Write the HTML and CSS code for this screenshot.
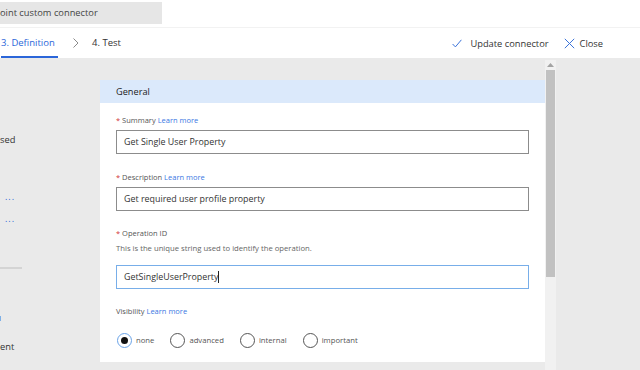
FILE: index.html
```html
<!DOCTYPE html>
<html>
<head>
<meta charset="utf-8">
<link rel="stylesheet" href="styles.css">
</head>
<body>
<div class="page">
  <div class="topbar">
    <div class="titlebox">oint custom connector</div>
  </div>
  <div class="tabbar">
    <div class="tabs">
      <div class="tab active">3. Definition</div>
      <svg class="chev" width="8" height="12" viewBox="0 0 8 12"><path d="M1.5 1.5 L6 6 L1.5 10.5" fill="none" stroke="#8a8a8a" stroke-width="1"/></svg>
      <div class="tab">4. Test</div>
    </div>
    <div class="actions">
      <div class="action check">
        <svg width="10" height="9" viewBox="0 0 10 9"><path d="M0.6 5 L3.4 7.9 L9.4 0.8" fill="none" stroke="#3b73d9" stroke-width="1"/></svg>
        <span>Update connector</span>
      </div>
      <div class="action close">
        <svg width="11" height="11" viewBox="0 0 11 11"><path d="M0.8 0.8 L10.2 10.2 M10.2 0.8 L0.8 10.2" fill="none" stroke="#3b73d9" stroke-width="1"/></svg>
        <span>Close</span>
      </div>
    </div>
  </div>
  <div class="main">
    <div class="side">
      <div class="side-text s1">sed</div>
      <div class="side-dots d1">...</div>
      <div class="side-dots d2">...</div>
      <div class="side-rule"></div>
      <div class="side-mark"></div>
      <div class="side-text s2">ent</div>
    </div>
    <div class="card">
      <div class="card-head">General</div>
      <div class="card-body">
        <div class="label"><span class="req">*</span> Summary <span class="link">Learn more</span></div>
        <div class="input">Get Single User Property</div>
        <div class="label gap"><span class="req">*</span> Description <span class="link">Learn more</span></div>
        <div class="input">Get required user profile property</div>
        <div class="label gap2"><span class="req">*</span> Operation ID</div>
        <div class="helper">This is the unique string used to identify the operation.</div>
        <div class="input focus">GetSingleUserProperty<span class="caret"></span></div>
        <div class="label gap2">Visibility <span class="link">Learn more</span></div>
        <div class="radios">
          <div class="radio"><span class="circle on"><span class="dot"></span></span><span>none</span></div>
          <div class="radio"><span class="circle"></span><span>advanced</span></div>
          <div class="radio"><span class="circle"></span><span>internal</span></div>
          <div class="radio"><span class="circle"></span><span>important</span></div>
        </div>
      </div>
    </div>
    <div class="scroll">
      <svg class="arrow" width="7" height="4" viewBox="0 0 7 4"><path d="M0 4 L3.5 0 L7 4 Z" fill="#a3a3a3"/></svg>
      <div class="thumb"></div>
    </div>
    <div class="rest"></div>
  </div>
</div>
</body>
</html>
```
FILE: styles.css
```css
html, body {
  margin: 0;
  padding: 0;
}
body {
  width: 640px;
  height: 370px;
  overflow: hidden;
  font-family: "Open Sans", "Noto Sans", sans-serif;
  color: #333;
  background: #eaeaea;
}
.page {
  width: 640px;
  height: 370px;
  display: flex;
  flex-direction: column;
}
.topbar {
  height: 28px;
  background: #fff;
  border-bottom: 1px solid #f2f2f2;
  box-sizing: border-box;
  padding-top: 2px;
}
.titlebox {
  width: 162px;
  height: 22px;
  background: #e6e6e6;
  font-size: 9.3px;
  line-height: 22px;
  color: #444;
  white-space: nowrap;
  overflow: hidden;
}
.tabbar {
  height: 30px;
  background: #fff;
  display: flex;
  justify-content: space-between;
  align-items: stretch;
}
.tabs {
  display: flex;
  align-items: stretch;
}
.tab {
  font-size: 9.5px;
  line-height: 28px;
  color: #333;
  padding-top: 1px;
  box-sizing: border-box;
  border-bottom: 2px solid transparent;
  white-space: nowrap;
}
.tab.active {
  color: #2b66d9;
  border-bottom-color: #2b66d9;
  width: 57px;
  margin-left: 1px;
}
.chev {
  align-self: center;
  margin: 0 12px 0 14px;
}
.actions {
  display: flex;
  align-items: center;
  padding-right: 37px;
  padding-top: 1px;
}
.action {
  display: flex;
  align-items: center;
  font-size: 9.3px;
  color: #333;
}
.action.check {
  gap: 8px;
}
.action.close {
  gap: 5px;
  margin-left: 15px;
}
.main {
  flex: 1;
  display: flex;
  background: #eaeaea;
}
.side {
  width: 100px;
  font-size: 9.3px;
  color: #333;
}
.side-text.s1 {
  margin-top: 74px;
  line-height: 16px;
}
.side-dots {
  color: #2b66d9;
  font-size: 9px;
  line-height: 12px;
  letter-spacing: 1px;
  padding-left: 5px;
}
.side-dots.d1 {
  margin-top: 43px;
}
.side-dots.d2 {
  margin-top: 10px;
}
.side-rule {
  width: 22px;
  height: 2px;
  background: #d4d4d4;
  margin-top: 42px;
}
.side-mark {
  width: 1px;
  height: 5px;
  background: #7fb0e6;
  margin-top: 47px;
}
.side-text.s2 {
  margin-top: 18px;
  line-height: 16px;
}
.card {
  width: 445px;
  margin-top: 22px;
  height: 282px;
  background: #fff;
}
.card-head {
  height: 23px;
  background: #dbe9fb;
  font-size: 9.2px;
  line-height: 23px;
  padding-left: 16px;
  color: #222;
}
.card-body {
  padding: 10px 16px 14px 16px;
}
.label {
  font-size: 7.5px;
  line-height: 14px;
  color: #555;
  margin-bottom: 3px;
}
.label.gap {
  margin-top: 16px;
}
.label.gap2 {
  margin-top: 15px;
  margin-bottom: 1px;
}
.req {
  color: #d13438;
}
.link {
  color: #3a78e3;
}
.helper {
  font-size: 7.7px;
  line-height: 14px;
  color: #666;
  margin-bottom: 10px;
}
.input {
  height: 24px;
  box-sizing: border-box;
  border: 1px solid #8c8c8c;
  font-size: 8.9px;
  line-height: 22px;
  padding-left: 7px;
  color: #333;
}
.input.focus {
  border-color: #78aee9;
}
.caret {
  display: inline-block;
  width: 1px;
  height: 12px;
  background: #222;
  vertical-align: middle;
  margin-top: -2px;
}
.radios {
  display: flex;
  align-items: center;
  margin-top: 14px;
  height: 16px;
  padding-left: 1px;
}
.radio {
  display: flex;
  align-items: center;
  font-size: 7.7px;
  color: #555;
  margin-right: 16px;
}
.circle {
  width: 15px;
  height: 15px;
  box-sizing: border-box;
  border: 1px solid #555;
  border-radius: 50%;
  margin-right: 4px;
  display: flex;
  align-items: center;
  justify-content: center;
}
.circle.on {
  border-color: #6aa3e8;
}
.dot {
  width: 7px;
  height: 7px;
  border-radius: 50%;
  background: #111;
}
.scroll {
  width: 11px;
  margin-top: 2px;
  background: #f1f1f1;
  display: flex;
  flex-direction: column;
  align-items: center;
}
.arrow {
  margin-top: 3px;
}
.thumb {
  width: 9px;
  height: 207px;
  margin-top: 3px;
  background: #c1c1c1;
}
.rest {
  flex: 1;
}
```
